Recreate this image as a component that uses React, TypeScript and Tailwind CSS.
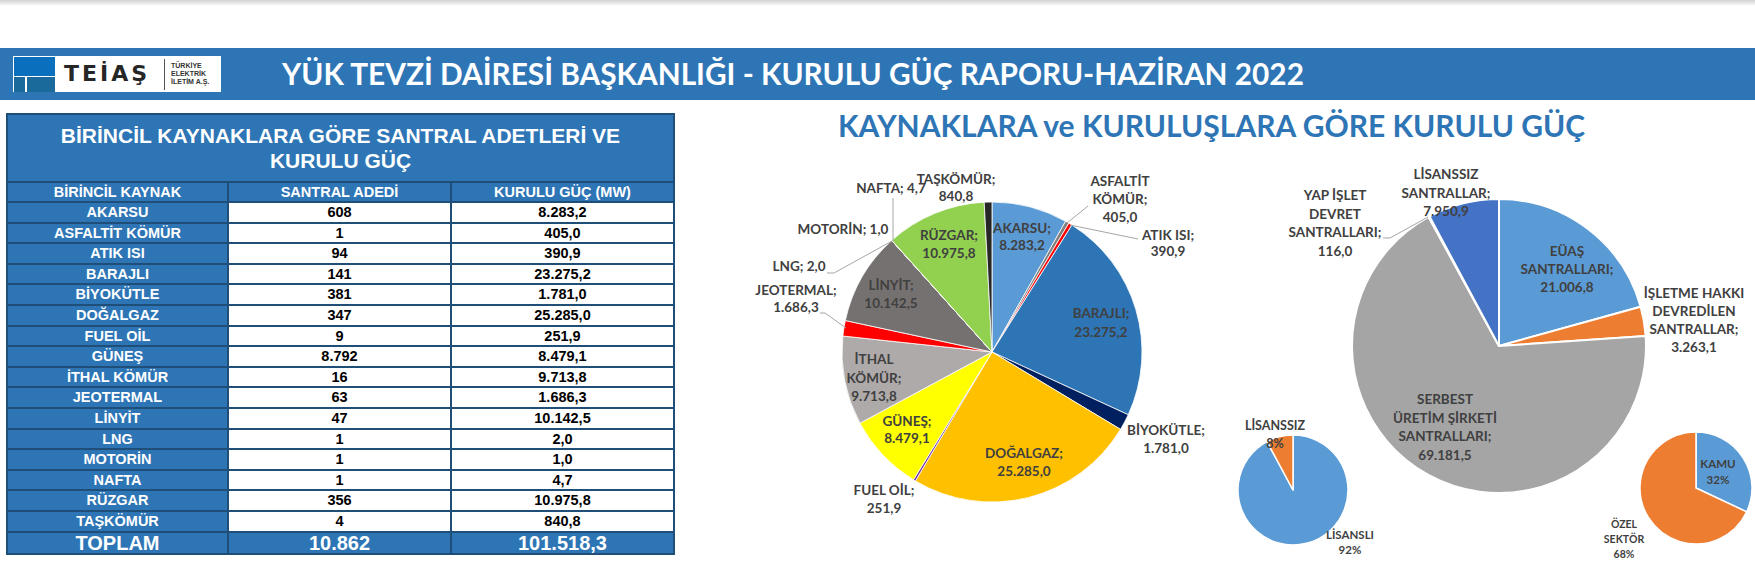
import React from 'react'

const rows: [string, string, string][] = [
  ['AKARSU', '608', '8.283,2'],
  ['ASFALTİT KÖMÜR', '1', '405,0'],
  ['ATIK ISI', '94', '390,9'],
  ['BARAJLI', '141', '23.275,2'],
  ['BİYOKÜTLE', '381', '1.781,0'],
  ['DOĞALGAZ', '347', '25.285,0'],
  ['FUEL OİL', '9', '251,9'],
  ['GÜNEŞ', '8.792', '8.479,1'],
  ['İTHAL KÖMÜR', '16', '9.713,8'],
  ['JEOTERMAL', '63', '1.686,3'],
  ['LİNYİT', '47', '10.142,5'],
  ['LNG', '1', '2,0'],
  ['MOTORİN', '1', '1,0'],
  ['NAFTA', '1', '4,7'],
  ['RÜZGAR', '356', '10.975,8'],
  ['TAŞKÖMÜR', '4', '840,8'],
]

type Slice = { v: number; c: string }

const sources: Slice[] = [
  { v: 8283.2, c: '#5b9bd5' },
  { v: 405, c: '#7f7f7f' },
  { v: 390.9, c: '#ff0000' },
  { v: 23275.2, c: '#2e75b6' },
  { v: 1781, c: '#002060' },
  { v: 25285, c: '#ffc000' },
  { v: 251.9, c: '#7030a0' },
  { v: 8479.1, c: '#ffff00' },
  { v: 9713.8, c: '#aeaaaa' },
  { v: 1686.3, c: '#ff0000' },
  { v: 10142.5, c: '#767171' },
  { v: 2, c: '#c00000' },
  { v: 1, c: '#00b050' },
  { v: 4.7, c: '#00b0f0' },
  { v: 10975.8, c: '#92d050' },
  { v: 840.8, c: '#262626' },
]

const owners: Slice[] = [
  { v: 21006.8, c: '#5b9bd5' },
  { v: 3263.1, c: '#ed7d31' },
  { v: 69181.5, c: '#a5a5a5' },
  { v: 116, c: '#ffc000' },
  { v: 7950.9, c: '#4472c4' },
]

const licence: Slice[] = [
  { v: 93567.4, c: '#5b9bd5' },
  { v: 7950.9, c: '#ed7d31' },
]

const sector: Slice[] = [
  { v: 32, c: '#5b9bd5' },
  { v: 68, c: '#ed7d31' },
]

// angles in degrees, clockwise from 12 o'clock
function slicePath(cx: number, cy: number, r: number, a0: number, a1: number) {
  const rad = (a: number) => ((a - 90) * Math.PI) / 180
  const x0 = cx + r * Math.cos(rad(a0))
  const y0 = cy + r * Math.sin(rad(a0))
  const x1 = cx + r * Math.cos(rad(a1))
  const y1 = cy + r * Math.sin(rad(a1))
  const large = a1 - a0 > 180 ? 1 : 0
  return `M ${cx} ${cy} L ${x0} ${y0} A ${r} ${r} 0 ${large} 1 ${x1} ${y1} Z`
}

function Pie({ cx, cy, r, data, sw }: { cx: number; cy: number; r: number; data: Slice[]; sw: number }) {
  const total = data.reduce((s, d) => s + d.v, 0)
  let a = 0
  return (
    <g>
      {data.map((d, i) => {
        const a0 = a
        a += (d.v / total) * 360
        return <path key={i} d={slicePath(cx, cy, r, a0, a)} fill={d.c} stroke="#fff" strokeWidth={sw} strokeLinejoin="round" />
      })}
    </g>
  )
}

function Label({ x, y, lines, gap = 18, size = 13.5 }: { x: number; y: number; lines: string[]; gap?: number; size?: number }) {
  return (
    <text x={x} y={y} textAnchor="middle" dominantBaseline="middle" fill="#404040" fontSize={size} fontWeight={700}>
      {lines.map((l, i) => (
        <tspan key={i} x={x} dy={i === 0 ? 0 : gap}>
          {l}
        </tspan>
      ))}
    </text>
  )
}

function Logo() {
  return (
    <div className="ml-[13px] flex h-[36px] w-[208px] items-center bg-white">
      <svg width="42" height="36" viewBox="0 0 42 36" className="ml-px shrink-0">
        <rect x="0" y="1" width="41" height="19" fill="#0a70be" />
        <rect x="0" y="21" width="11" height="15" fill="#1b6a9c" />
        <rect x="13" y="21" width="28" height="15" fill="#1b6a9c" />
      </svg>
      <span className="w-[108px] shrink-0 pl-[8px] font-['DejaVu_Sans',sans-serif] text-[22px] leading-[30px] font-bold tracking-[3px] text-[#262626]">
        TEİAŞ
      </span>
      <div className="h-[31px] w-px shrink-0 bg-[#555]" />
      <div className="ml-[6px] flex flex-col font-['Liberation_Sans',sans-serif] text-[7px] leading-[8px] font-bold text-[#333]">
        <span>TÜRKİYE</span>
        <span>ELEKTRİK</span>
        <span>İLETİM A.Ş.</span>
      </div>
    </div>
  )
}

export default function App() {
  return (
    <div className="h-[583px] w-[1755px] overflow-hidden bg-white font-['Liberation_Sans',sans-serif]">
      <div className="h-[6px] bg-linear-to-b from-[#d2d2d2] to-white" />

      {/* Header */}
      <header className="mt-[42px] flex h-[52px] items-center bg-[#2e75b6]">
        <Logo />
        <h1 className="ml-[61px] font-['Lato',sans-serif] text-[29.8px] leading-none font-bold text-white">
          YÜK TEVZİ DAİRESİ BAŞKANLIĞI - KURULU GÜÇ RAPORU-HAZİRAN 2022
        </h1>
      </header>

      <div className="flex">
        {/* Table */}
        <div className="mt-[13px] ml-[6px] grid w-[669px] grid-cols-[219px_221px_221px] gap-[2px] self-start bg-[#1f4e79] p-[2px] text-[14.5px] leading-none font-bold">
          <div className="col-span-3 flex h-[66px] flex-col items-center justify-center bg-[#2e75b6] text-[21px] leading-[25px] text-white">
            <span>BİRİNCİL KAYNAKLARA GÖRE SANTRAL ADETLERİ VE</span>
            <span>KURULU GÜÇ</span>
          </div>
          {['BİRİNCİL KAYNAK', 'SANTRAL ADEDİ', 'KURULU GÜÇ (MW)'].map((h) => (
            <div key={h} className="flex h-[18px] items-center justify-center bg-[#2e75b6] text-white">
              {h}
            </div>
          ))}
          {rows.map(([name, count, power]) => (
            <React.Fragment key={name}>
              <div className="flex h-[18.6px] items-center justify-center bg-[#2e75b6] text-white">{name}</div>
              <div className="flex h-[18.6px] items-center justify-center bg-white text-black">{count}</div>
              <div className="flex h-[18.6px] items-center justify-center bg-white text-black">{power}</div>
            </React.Fragment>
          ))}
          <div className="flex h-[20px] items-center justify-center bg-[#2e75b6] text-[20px] text-white">TOPLAM</div>
          <div className="flex h-[20px] items-center justify-center bg-[#2e75b6] text-[20px] text-white">10.862</div>
          <div className="flex h-[20px] items-center justify-center bg-[#2e75b6] text-[20px] text-white">101.518,3</div>
        </div>

        {/* Charts */}
        <div className="flex w-[1080px] flex-col">
          <h2 className="flex h-[50px] items-center pl-[163px] font-['Lato',sans-serif] text-[30px] leading-none font-bold text-[#2e75b6]">
            KAYNAKLARA ve KURULUŞLARA GÖRE KURULU GÜÇ
          </h2>
          <svg width="1080" height="433" viewBox="675 150 1080 433" className="font-['Lato',sans-serif]">
            <Pie cx={992} cy={352} r={150} data={sources} sw={0.8} />
            <Pie cx={1499} cy={346} r={147} data={owners} sw={2} />
            <Pie cx={1293} cy={490} r={55} data={licence} sw={1.5} />
            <Pie cx={1696} cy={488} r={56} data={sector} sw={1.5} />

            <g stroke="#a6a6a6" strokeWidth={1} fill="none">
              <polyline points="893,198 893,241" />
              <polyline points="827,273 834,273 892,241" />
              <polyline points="820,313 825,313 846,328" />
              <polyline points="1067,223 1088,206" />
              <polyline points="1070,225 1138,239" />
              <polyline points="1383,238 1390,238 1428,217" />
            </g>

            <Label x={1022} y={230} lines={['AKARSU;', '8.283,2']} gap={17} />
            <Label x={1120} y={183} lines={['ASFALTİT', 'KÖMÜR;', '405,0']} />
            <Label x={1168} y={237} lines={['ATIK ISI;', '390,9']} gap={16} />
            <Label x={1101} y={315} lines={['BARAJLI;', '23.275,2']} gap={19} />
            <Label x={1166} y={432} lines={['BİYOKÜTLE;', '1.781,0']} />
            <Label x={1024} y={455} lines={['DOĞALGAZ;', '25.285,0']} />
            <Label x={884} y={492} lines={['FUEL OİL;', '251,9']} />
            <Label x={907} y={423} lines={['GÜNEŞ;', '8.479,1']} gap={17} />
            <Label x={874} y={361} lines={['İTHAL', 'KÖMÜR;', '9.713,8']} gap={18.5} />
            <Label x={796} y={292} lines={['JEOTERMAL;', '1.686,3']} gap={17} />
            <Label x={891} y={287} lines={['LİNYİT;', '10.142,5']} />
            <Label x={799} y={268} lines={['LNG; 2,0']} />
            <Label x={843} y={231} lines={['MOTORİN; 1,0']} />
            <Label x={891} y={190} lines={['NAFTA; 4,7']} />
            <Label x={949} y={237} lines={['RÜZGAR;', '10.975,8']} />
            <Label x={956} y={181} lines={['TAŞKÖMÜR;', '840,8']} gap={17} />

            <Label x={1446} y={176} lines={['LİSANSSIZ', 'SANTRALLAR;', '7.950,9']} gap={18.5} />
            <Label x={1335} y={197} lines={['YAP İŞLET', 'DEVRET', 'SANTRALLARI;', '116,0']} gap={18.5} />
            <Label x={1567} y={253} lines={['EÜAŞ', 'SANTRALLARI;', '21.006,8']} />
            <Label x={1694} y={295} lines={['İŞLETME HAKKI', 'DEVREDİLEN', 'SANTRALLAR;', '3.263,1']} />
            <Label x={1445} y={401} lines={['SERBEST', 'ÜRETİM ŞİRKETİ', 'SANTRALLARI;', '69.181,5']} gap={18.7} />

            <Label x={1275} y={427} lines={['LİSANSSIZ', '8%']} gap={18} size={12.5} />
            <Label x={1350} y={536} lines={['LİSANSLI', '92%']} gap={15} size={11.5} />
            <Label x={1718} y={465} lines={['KAMU', '32%']} gap={16} size={11.5} />
            <Label x={1624} y={525} lines={['ÖZEL', 'SEKTÖR', '68%']} gap={15} size={10.5} />
          </svg>
        </div>
      </div>
    </div>
  )
}
